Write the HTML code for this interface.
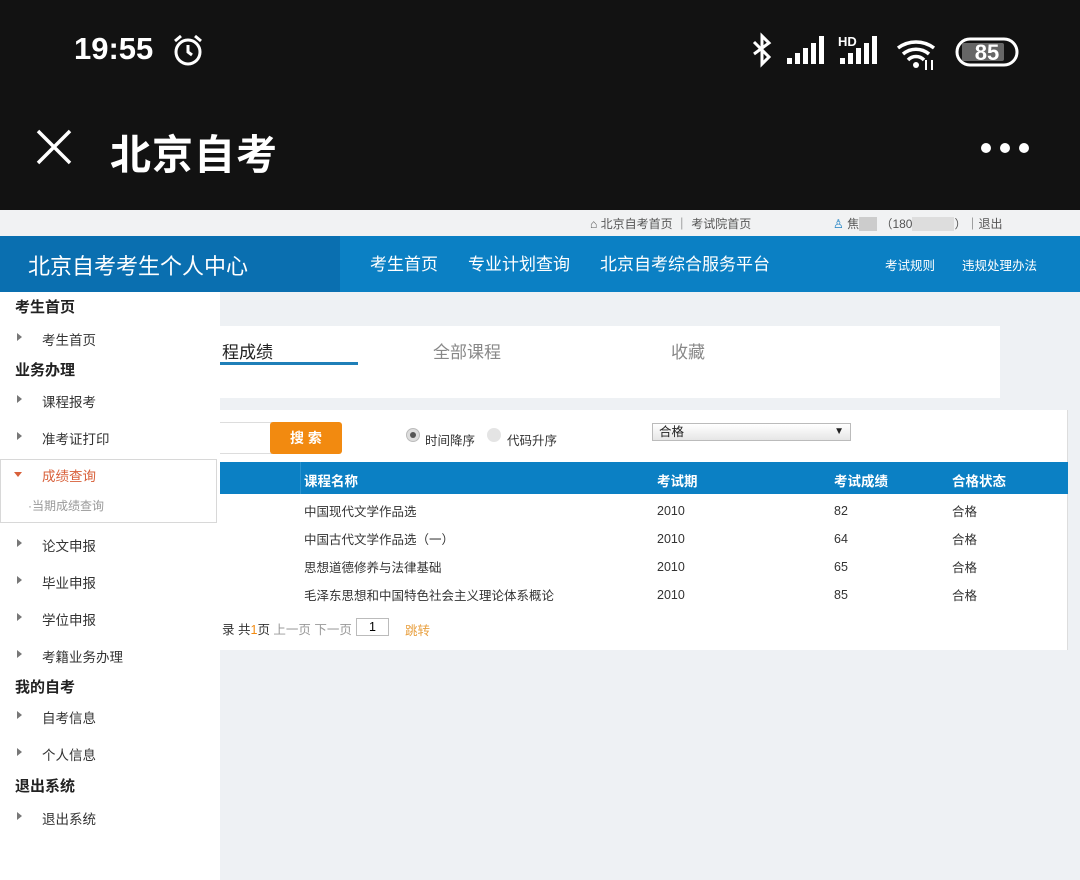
<!DOCTYPE html>
<html><head><meta charset="utf-8"><style>
*{margin:0;padding:0;box-sizing:border-box}
body{width:1080px;height:880px;overflow:hidden;background:#eef1f4;font-family:"Liberation Sans","Noto Sans CJK SC",sans-serif;position:relative}
.a{position:absolute;white-space:nowrap}
.top{left:0;top:0;width:1080px;height:210px;background:#121212}
.side{left:0;top:292px;width:220px;height:588px;background:#fff}
.h{left:15px;font-size:15px;font-weight:bold;color:#222}
.i{left:42px;font-size:13.5px;color:#333}
.t{left:17px;width:0;height:0;border-top:4px solid transparent;border-bottom:4px solid transparent;border-left:5px solid #777}
.td{font-size:12.5px;color:#333}
.n{font-size:12.5px;color:#333;margin-top:3px}
.th{font-size:13.5px;font-weight:bold;color:#fff;top:470px}
</style></head><body>
<div class="a top"></div>
<div class="a" style="left:74px;top:31px;font-size:31px;color:#fff;font-weight:bold">19:55</div>
<svg class="a" style="left:170px;top:32px" width="36" height="36" viewBox="0 0 36 36" fill="none" stroke="#fff" stroke-width="3"><circle cx="18" cy="20" r="12"/><path d="M18 13v7l4 3M5 9l6-5M31 9l-6-5"/></svg>
<svg class="a" style="left:750px;top:32px" width="280" height="40" viewBox="0 0 280 40">
<path d="M4 10l15 15-7 7V4l7 7L4 22" fill="none" stroke="#fff" stroke-width="3"/>
<g fill="#fff"><rect x="37" y="26" width="5" height="6"/><rect x="45" y="21" width="5" height="11"/><rect x="53" y="16" width="5" height="16"/><rect x="61" y="11" width="5" height="21"/><rect x="69" y="4" width="5" height="28"/>
<rect x="90" y="26" width="5" height="6"/><rect x="98" y="21" width="5" height="11"/><rect x="106" y="16" width="5" height="16"/><rect x="114" y="11" width="5" height="21"/><rect x="122" y="4" width="5" height="28"/></g>
<text x="88" y="14" fill="#fff" font-size="13" font-weight="bold" font-family="Liberation Sans">HD</text>
<path d="M148 16a30 30 0 0 1 36 0M153 22a20 20 0 0 1 26 0M158 28a11 11 0 0 1 16 0" fill="none" stroke="#fff" stroke-width="3.5"/><circle cx="166" cy="33" r="3" fill="#fff"/>
<path d="M176 38v-10M182 28v10" stroke="#fff" stroke-width="2"/>
<rect x="207" y="7" width="60" height="26" rx="13" fill="none" stroke="#fff" stroke-width="3"/><rect x="212" y="11" width="42" height="18" rx="2" fill="#666"/>
<text x="237" y="28" fill="#fff" font-size="22" font-weight="bold" text-anchor="middle" font-family="Liberation Sans">85</text></svg>
<svg class="a" style="left:36px;top:129px" width="36" height="36"><path d="M2 2L34 34M34 2L2 34" stroke="#fff" stroke-width="3.5"/></svg>
<div class="a" style="left:110px;top:121px;font-size:41px;color:#fff;font-weight:bold;letter-spacing:1px">北京自考</div>
<div class="a" style="left:980px;top:141px"><svg width="50" height="12"><circle cx="6" cy="6" r="5" fill="#fff"/><circle cx="25" cy="6" r="5" fill="#fff"/><circle cx="44" cy="6" r="5" fill="#fff"/></svg></div>

<div class="a" style="left:0;top:210px;width:1080px;height:26px;background:#f1f2f3"></div>
<div class="a" style="left:590px;top:215px;font-size:12px;color:#555">⌂ 北京自考首页 ｜ 考试院首页</div>
<div class="a" style="left:833px;top:215px;font-size:12px;color:#555"><span style="color:#1a7fc2">♙</span> 焦<span style="background:#ccc;color:#ccc">xxx</span> （180<span style="background:#ddd;color:#ddd">xxxxxxx</span>）｜退出</div>
<div class="a" style="left:0;top:236px;width:1080px;height:56px;background:#0b80c4"></div>
<div class="a" style="left:0;top:236px;width:340px;height:56px;background:#0a6fb0"></div>
<div class="a" style="left:28px;top:249px;font-size:22px;color:#fff">北京自考考生个人中心</div>
<div class="a" style="left:370px;top:250px;font-size:17px;color:#fff">考生首页</div>
<div class="a" style="left:468px;top:250px;font-size:17px;color:#fff">专业计划查询</div>
<div class="a" style="left:600px;top:250px;font-size:17px;color:#fff">北京自考综合服务平台</div>
<div class="a" style="left:885px;top:255px;font-size:12.5px;color:#fff">考试规则</div>
<div class="a" style="left:962px;top:255px;font-size:12.5px;color:#fff">违规处理办法</div>

<div class="a" style="left:220px;top:326px;width:780px;height:72px;background:#fff"></div>
<div class="a" style="left:222px;top:338px;font-size:17px;color:#222">程成绩</div>
<div class="a" style="left:220px;top:362px;width:138px;height:3px;background:#1f7fb8"></div>
<div class="a" style="left:433px;top:338px;font-size:17px;color:#888">全部课程</div>
<div class="a" style="left:671px;top:338px;font-size:17px;color:#888">收藏</div>

<div class="a" style="left:220px;top:410px;width:848px;height:240px;background:#fff;border-right:1px solid #ddd"></div>
<div class="a" style="left:220px;top:422px;width:52px;height:32px;border:1px solid #ddd;border-left:none"></div>
<div class="a" style="left:270px;top:422px;width:72px;height:32px;background:#f28a10;border-radius:3px;color:#fff;font-weight:bold;font-size:14px;text-align:center;line-height:32px">搜 索</div>
<div class="a" style="left:406px;top:428px;width:14px;height:14px;border-radius:7px;background:#ddd;border:1px solid #bbb"><div style="margin:3px;width:6px;height:6px;border-radius:3px;background:#555"></div></div>
<div class="a" style="left:425px;top:430px;font-size:12.5px;color:#333">时间降序</div>
<div class="a" style="left:487px;top:428px;width:14px;height:14px;border-radius:7px;background:#e4e4e4"></div>
<div class="a" style="left:507px;top:430px;font-size:12.5px;color:#333">代码升序</div>
<div class="a" style="left:652px;top:423px;width:199px;height:18px;border:1px solid #bbb;background:linear-gradient(#fff,#e6e6e6);font-size:12.5px;color:#222;padding-left:6px;line-height:16px">合格<span style="position:absolute;right:6px;font-size:10px">▼</span></div>

<div class="a" style="left:220px;top:462px;width:848px;height:32px;background:#0b80c4"></div>
<div class="a" style="left:300px;top:462px;width:1px;height:32px;background:#2a93d0"></div>
<div class="a th" style="left:304px">课程名称</div>
<div class="a th" style="left:657px">考试期</div>
<div class="a th" style="left:834px">考试成绩</div>
<div class="a th" style="left:952px">合格状态</div>
<div class="a td" style="left:304px;top:501px">中国现代文学作品选</div>
<div class="a td" style="left:304px;top:529px">中国古代文学作品选（一）</div>
<div class="a td" style="left:304px;top:557px">思想道德修养与法律基础</div>
<div class="a td" style="left:304px;top:585px">毛泽东思想和中国特色社会主义理论体系概论</div>
<div class="a n" style="left:657px;top:501px">2010</div><div class="a n" style="left:657px;top:529px">2010</div><div class="a n" style="left:657px;top:557px">2010</div><div class="a n" style="left:657px;top:585px">2010</div>
<div class="a n" style="left:834px;top:501px">82</div><div class="a n" style="left:834px;top:529px">64</div><div class="a n" style="left:834px;top:557px">65</div><div class="a n" style="left:834px;top:585px">85</div>
<div class="a td" style="left:952px;top:501px">合格</div><div class="a td" style="left:952px;top:529px">合格</div><div class="a td" style="left:952px;top:557px">合格</div><div class="a td" style="left:952px;top:585px">合格</div>
<div class="a td" style="left:222px;top:619px">录 共<span style="color:#f28a10">1</span>页 <span style="color:#999">上一页 下一页</span></div>
<div class="a" style="left:356px;top:618px;width:33px;height:18px;border:1px solid #bbb;font-size:12.5px;text-align:center;line-height:16px">1</div>
<div class="a" style="left:405px;top:620px;font-size:12.5px;color:#e8a040">跳转</div>

<div class="a side"></div>
<div class="a h" style="top:296px">考生首页</div>
<div class="a t" style="top:333px"></div><div class="a i" style="top:329px">考生首页</div>
<div class="a h" style="top:359px">业务办理</div>
<div class="a t" style="top:395px"></div><div class="a i" style="top:391px">课程报考</div>
<div class="a t" style="top:432px"></div><div class="a i" style="top:428px">准考证打印</div>
<div class="a" style="left:0;top:459px;width:217px;height:64px;border:1px solid #d8d8d8"></div>
<div class="a" style="left:14px;top:472px;width:0;height:0;border-left:4px solid transparent;border-right:4px solid transparent;border-top:5px solid #d8603a"></div>
<div class="a i" style="top:465px;color:#d8603a">成绩查询</div>
<div class="a" style="left:28px;top:497px;font-size:12px;color:#999">·当期成绩查询</div>
<div class="a t" style="top:539px"></div><div class="a i" style="top:535px">论文申报</div>
<div class="a t" style="top:576px"></div><div class="a i" style="top:572px">毕业申报</div>
<div class="a t" style="top:613px"></div><div class="a i" style="top:609px">学位申报</div>
<div class="a t" style="top:650px"></div><div class="a i" style="top:646px">考籍业务办理</div>
<div class="a h" style="top:676px">我的自考</div>
<div class="a t" style="top:711px"></div><div class="a i" style="top:707px">自考信息</div>
<div class="a t" style="top:748px"></div><div class="a i" style="top:744px">个人信息</div>
<div class="a h" style="top:775px">退出系统</div>
<div class="a t" style="top:812px"></div><div class="a i" style="top:808px">退出系统</div>
</body></html>
